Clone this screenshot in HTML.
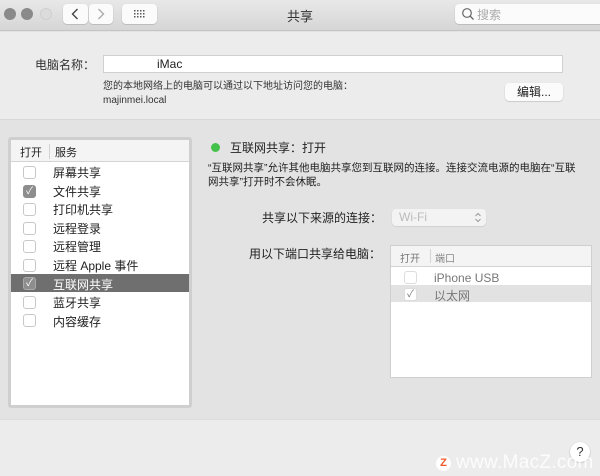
<!DOCTYPE html>
<html><head><meta charset="utf-8"><style>
*{margin:0;padding:0;box-sizing:border-box}
body{width:600px;height:476px;overflow:hidden;background:#e3e3e3;font-family:"Liberation Sans","Noto Sans CJK SC",sans-serif;color:#222;position:relative}
.abs{position:absolute}
.tb{left:0;top:0;width:600px;height:31px;background:linear-gradient(#e8e8e8,#d6d6d6);border-bottom:1px solid #c4c4c4}
.dot{width:12px;height:12px;border-radius:50%;top:8px}
.btn{background:#fbfbfb;border-radius:4px;box-shadow:0 0.5px 1px rgba(0,0,0,.25)}
.t12{font-size:12px}
.t11{font-size:11px}
.cb{width:13px;height:13px;border:1px solid #c8c8c8;border-radius:3px;background:#fff;left:16px}
.cbk{background:#8d8d8d;border-color:#8d8d8d;color:#fff;font-size:10px;line-height:11px;text-align:center}
</style></head><body>
<div class="abs tb"></div>
<div class="abs dot" style="left:4px;background:#8a8a8a"></div>
<div class="abs dot" style="left:21px;background:#8a8a8a"></div>
<div class="abs dot" style="left:40px;background:#dcdcdc;border:1px solid #cfcfcf"></div>
<div class="abs btn" style="left:63px;top:4px;width:25px;height:20px"><svg width="25" height="20"><path d="M14.5 5L9.5 10L14.5 15" stroke="#444" stroke-width="1.4" fill="none"/></svg></div>
<div class="abs btn" style="left:89px;top:4px;width:24px;height:20px"><svg width="24" height="20"><path d="M9.5 5L14.5 10L9.5 15" stroke="#aaa" stroke-width="1.4" fill="none"/></svg></div>
<div class="abs btn" style="left:122px;top:4px;width:35px;height:20px"><svg width="35" height="20"><g fill="#555"><rect x="12" y="6" width="1.5" height="1.5"/><rect x="15" y="6" width="1.5" height="1.5"/><rect x="18" y="6" width="1.5" height="1.5"/><rect x="21" y="6" width="1.5" height="1.5"/><rect x="12" y="9" width="1.5" height="1.5"/><rect x="15" y="9" width="1.5" height="1.5"/><rect x="18" y="9" width="1.5" height="1.5"/><rect x="21" y="9" width="1.5" height="1.5"/><rect x="12" y="12" width="1.5" height="1.5"/><rect x="15" y="12" width="1.5" height="1.5"/><rect x="18" y="12" width="1.5" height="1.5"/><rect x="21" y="12" width="1.5" height="1.5"/></g></svg></div>
<div class="abs" style="left:0;width:600px;top:6px;text-align:center;font-size:13px;color:#333">共享</div>
<div class="abs btn" style="left:455px;top:4px;width:150px;height:20px;border-radius:4px"><svg class="abs" style="left:6px;top:3px" width="14" height="14"><circle cx="6" cy="6" r="4.3" stroke="#666" stroke-width="1.2" fill="none"/><path d="M9 9L12.5 12.5" stroke="#666" stroke-width="1.3"/></svg><span class="abs t12" style="left:22px;top:2px;color:#aaa">搜索</span></div>
<div class="abs" style="left:0;top:32px;width:600px;height:88px;background:#ececec;border-bottom:1px solid #d8d8d8"></div>
<div class="abs t12" style="left:35px;top:56px;color:#333">电脑名称：</div>
<div class="abs" style="left:103px;top:55px;width:460px;height:18px;background:#fff;border:1px solid #d0d0d0"></div>
<div class="abs t12" style="left:157px;top:57px">iMac</div>
<div class="abs t11" style="left:103px;top:80px;line-height:14px;font-size:10px;color:#333">您的本地网络上的电脑可以通过以下地址访问您的电脑：<br>majinmei.local</div>
<div class="abs btn t12" style="left:505px;top:83px;width:58px;height:18px;text-align:center;line-height:18px">编辑...</div>
<div class="abs" style="left:8px;top:137px;width:184px;height:271px;background:#fff;border:3px solid #cfcfcf;border-radius:3px"></div>
<div class="abs" style="left:11px;top:140px;width:178px;height:22px;background:#f4f4f4;border-bottom:1px solid #d4d4d4"></div>
<div class="abs" style="left:49px;top:144px;width:1px;height:15px;background:#d4d4d4"></div>
<div class="abs t11" style="left:20px;top:144px">打开</div>
<div class="abs t11" style="left:55px;top:144px">服务</div>
<div class="abs" style="left:11px;top:274px;width:178px;height:18px;background:#6f6f6f"></div>
<div class="abs t12" style="left:53px;top:164px;line-height:18.6px">屏幕共享<br>文件共享<br>打印机共享<br>远程登录<br>远程管理<br>远程 Apple 事件<br><span style="color:#fff">互联网共享</span><br>蓝牙共享<br>内容缓存</div>
<div class="abs cb" style="left:23px;top:166px"></div>
<div class="abs cb cbk" style="left:23px;top:185px">✓</div>
<div class="abs cb" style="left:23px;top:203px"></div>
<div class="abs cb" style="left:23px;top:222px"></div>
<div class="abs cb" style="left:23px;top:240px"></div>
<div class="abs cb" style="left:23px;top:259px"></div>
<div class="abs cb" style="left:23px;top:277px;background:#8d8d8d;border-color:#aaa;color:#fff;font-size:10px;line-height:11px;text-align:center">✓</div>
<div class="abs cb" style="left:23px;top:296px"></div>
<div class="abs cb" style="left:23px;top:314px"></div>
<div class="abs" style="left:211px;top:143px;width:9px;height:9px;border-radius:50%;background:#44c149"></div>
<div class="abs t12" style="left:230px;top:139px">互联网共享：打开</div>
<div class="abs" style="left:208px;top:161px;font-size:10.5px;line-height:14px;white-space:nowrap">“互联网共享”允许其他电脑共享您到互联网的连接。连接交流电源的电脑在“互联<br>网共享”打开时不会休眠。</div>
<div class="abs t12" style="left:262px;top:209px">共享以下来源的连接：</div>
<div class="abs" style="left:392px;top:209px;width:94px;height:17px;background:#f3f3f3;border-radius:4px;box-shadow:0 0.5px 1px rgba(0,0,0,.15)"><span class="abs t12" style="left:7px;top:1px;color:#bbb">Wi-Fi</span><svg class="abs" style="left:82px;top:2px" width="8" height="13"><path d="M1.5 5L4 2.5L6.5 5M1.5 8L4 10.5L6.5 8" stroke="#999" fill="none"/></svg></div>
<div class="abs t12" style="left:249px;top:245px">用以下端口共享给电脑：</div>
<div class="abs" style="left:390px;top:245px;width:202px;height:133px;background:#fff;border:1px solid #cfcfcf"></div>
<div class="abs" style="left:391px;top:246px;width:200px;height:21px;background:#f4f4f4;border-bottom:1px solid #d4d4d4"></div>
<div class="abs" style="left:430px;top:249px;width:1px;height:14px;background:#d4d4d4"></div>
<div class="abs" style="left:400px;top:250px;font-size:10px;color:#777">打开</div>
<div class="abs" style="left:435px;top:250px;font-size:10px;color:#888">端口</div>
<div class="abs" style="left:391px;top:285px;width:200px;height:17px;background:#e2e2e2"></div>
<div class="abs t12" style="left:434px;top:269px;color:#777;line-height:18px">iPhone USB<br>以太网</div>
<div class="abs cb" style="left:404px;top:271px;border-color:#ddd"></div>
<div class="abs cb" style="left:404px;top:288px;border-color:#ddd;color:#777;font-size:10px;line-height:11px;text-align:center">✓</div>
<div class="abs" style="left:0;top:419px;width:600px;height:57px;background:#ececec;border-top:1px solid #dcdcdc"></div>
<div class="abs" style="left:570px;top:442px;width:20px;height:20px;border-radius:50%;background:#fff;box-shadow:0 0.5px 1.5px rgba(0,0,0,.3);text-align:center;font-size:13px;line-height:20px;color:#333">?</div>
<div class="abs" style="left:436px;top:456px;width:15px;height:15px;border-radius:50%;background:#fff;text-align:center;font-weight:bold;font-size:11px;line-height:15px;color:#f05a28">Z</div>
<div class="abs" style="left:456px;top:452px;font-size:19px;color:rgba(255,255,255,.85);letter-spacing:0.3px">www.MacZ.com</div>
</body></html>
